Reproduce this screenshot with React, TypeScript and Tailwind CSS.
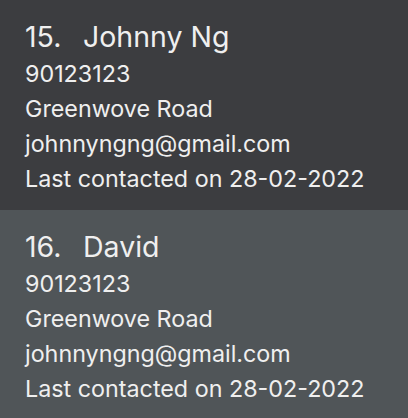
const people = [
  { index: 15, name: "Johnny Ng", dark: true },
  { index: 16, name: "David", dark: false },
];

function PersonCard({ index, name, dark }: { index: number; name: string; dark: boolean }) {
  return (
    <div className={`h-[210px] pl-[25px] pt-[18px] text-[#efefef] ${dark ? "bg-[#3c3d40]" : "bg-[#505558]"}`}>
      <div className="flex text-[28.5px] leading-[38px]">
        <span className="w-[58px]">{index}.</span>
        <span>{name}</span>
      </div>
      <div className="text-[23.3px] leading-[35px]">
        <div>90123123</div>
        <div>Greenwove Road</div>
        <div>johnnyngng@gmail.com</div>
        <div>Last contacted on 28-02-2022</div>
      </div>
    </div>
  );
}

export default function App() {
  return (
    <div className="w-[408px] h-[418px] overflow-hidden font-['Inter',sans-serif]">
      {people.map((p) => (
        <PersonCard key={p.index} {...p} />
      ))}
    </div>
  );
}
